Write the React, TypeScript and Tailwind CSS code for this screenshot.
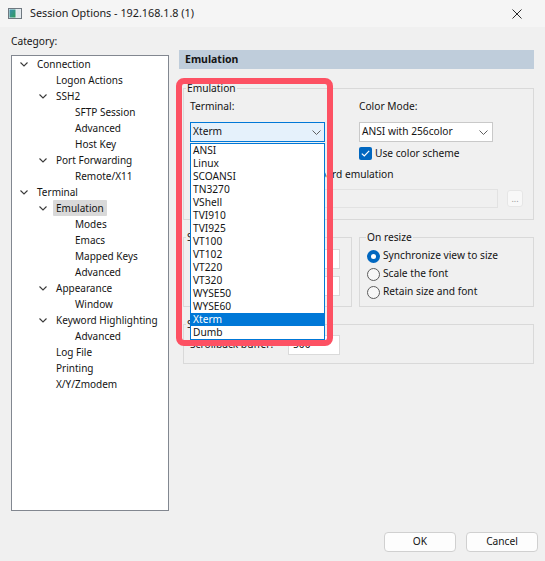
import React from "react";

type Node = { l: number; t: string; c?: boolean; sel?: boolean };

const tree: Node[] = [
  { l: 0, t: "Connection", c: true },
  { l: 1, t: "Logon Actions" },
  { l: 1, t: "SSH2", c: true },
  { l: 2, t: "SFTP Session" },
  { l: 2, t: "Advanced" },
  { l: 2, t: "Host Key" },
  { l: 1, t: "Port Forwarding", c: true },
  { l: 2, t: "Remote/X11" },
  { l: 0, t: "Terminal", c: true },
  { l: 1, t: "Emulation", c: true, sel: true },
  { l: 2, t: "Modes" },
  { l: 2, t: "Emacs" },
  { l: 2, t: "Mapped Keys" },
  { l: 2, t: "Advanced" },
  { l: 1, t: "Appearance", c: true },
  { l: 2, t: "Window" },
  { l: 1, t: "Keyword Highlighting", c: true },
  { l: 2, t: "Advanced" },
  { l: 1, t: "Log File" },
  { l: 1, t: "Printing" },
  { l: 1, t: "X/Y/Zmodem" },
];

const pads = ["pl-[8px]", "pl-[27px]", "pl-[46px]"];

const terms = [
  "ANSI",
  "Linux",
  "SCOANSI",
  "TN3270",
  "VShell",
  "TVI910",
  "TVI925",
  "VT100",
  "VT102",
  "VT220",
  "VT320",
  "WYSE50",
  "WYSE60",
  "Xterm",
  "Dumb",
];

function Chevron({ className = "" }: { className?: string }) {
  return (
    <svg width="8" height="5" viewBox="0 0 8 5" className={className}>
      <path d="M0.5 0.5 L4 4 L7.5 0.5" fill="none" stroke="#3a3a3a" strokeWidth="1.1" />
    </svg>
  );
}

function SelChevron() {
  return (
    <svg width="9" height="5" viewBox="0 0 9 5">
      <path d="M0.5 0.5 L4.5 4.5 L8.5 0.5" fill="none" stroke="#606060" strokeWidth="1" />
    </svg>
  );
}

function Radio({ on }: { on?: boolean }) {
  if (on)
    return (
      <span className="w-[13px] h-[13px] rounded-full bg-[#0067c0] flex items-center justify-center shrink-0">
        <span className="w-[5px] h-[5px] rounded-full bg-white" />
      </span>
    );
  return <span className="w-[13px] h-[13px] rounded-full border border-[#5c5c5c] bg-[#f7f7f7] shrink-0" />;
}

export default function App() {
  return (
    <div className="w-[545px] h-[561px] bg-[#f0f0f0] flex flex-col relative overflow-hidden text-[#141414] text-[10.2px] font-['Noto_Sans',sans-serif] select-none">
      {/* title bar */}
      <div className="h-[27px] bg-[#f5f5f5] flex items-center pl-[8px] pr-[23px] shrink-0">
        <svg width="14" height="11" viewBox="0 0 14 11" className="shrink-0">
          <defs>
            <linearGradient id="g1" x1="0" y1="0" x2="1" y2="1">
              <stop offset="0" stopColor="#3a8fb0" />
              <stop offset="1" stopColor="#2f9a5a" />
            </linearGradient>
          </defs>
          <rect x="0.5" y="0.5" width="13" height="10" fill="#e8eef2" stroke="#6f7880" />
          <rect x="1.5" y="1.5" width="6" height="8" fill="url(#g1)" />
          <rect x="8.5" y="1.5" width="4" height="8" fill="#dfe6ea" />
        </svg>
        <span className="ml-[8px] text-[10.8px] text-[#1a1a1a]">Session Options - 192.168.1.8 (1)</span>
        <span className="flex-1" />
        <svg width="10" height="10" viewBox="0 0 10 10">
          <path d="M0.5 0.5 L9.5 9.5 M9.5 0.5 L0.5 9.5" stroke="#2a2a2a" strokeWidth="1" />
        </svg>
      </div>

      {/* body */}
      <div className="flex-1 flex pl-[11px] gap-[10px]">
        {/* left */}
        <div className="w-[158px] flex flex-col pt-[7px]">
          <div className="h-[14px] leading-[14px]">Category:</div>
          <div className="mt-[7px] h-[456px] bg-white border border-[#828790] flex flex-col text-[10px]">
            {tree.map((n, i) => (
              <div key={i} className={`h-[16px] flex items-center ${pads[n.l]}`}>
                <span className="w-[17px] flex items-center shrink-0">{n.c && <Chevron />}</span>
                <span
                  className={`leading-[16px] whitespace-nowrap ${n.sel ? "bg-[#d9d9d9] px-[3px] -ml-[3px] rounded-[1px]" : ""}`}
                >
                  {n.t}
                </span>
              </div>
            ))}
          </div>
        </div>

        {/* right */}
        <div className="w-[355px] flex flex-col pt-[23px]">
          <div className="h-[19px] bg-[#bfcddb] pl-[6px] font-bold leading-[19px] text-[10.5px]">Emulation</div>

          <fieldset className="mt-[12px] ml-[4px] border border-[#d9d9d9] px-[6px] pb-[11px]">
            <legend className="-ml-[4px] px-[1px] leading-[14px]">Emulation</legend>
            <div className="mt-[4px] flex h-[14px] leading-[14px]">
              <span className="w-[135px]">Terminal:</span>
              <span className="ml-[34px]">Color Mode:</span>
            </div>
            <div className="mt-[9px] flex">
              <div className="w-[135px] h-[20px] bg-[#e5f1fb] border border-[#0078d7] flex items-center pl-[2px] pr-[3px]">
                <span className="flex-1">Xterm</span>
                <SelChevron />
              </div>
              <div className="ml-[34px] w-[134px] h-[20px] bg-white border border-[#c9c9c9] flex items-center pl-[2px] pr-[4px]">
                <span className="flex-1">ANSI with 256color</span>
                <SelChevron />
              </div>
            </div>
            <div className="mt-[5px] ml-[169px] h-[13px] flex items-center gap-[3px]">
              <span className="w-[13px] h-[13px] rounded-[2px] bg-[#0067c0] flex items-center justify-center">
                <svg width="9" height="7" viewBox="0 0 9 7">
                  <path d="M0.8 3.6 L3.3 6 L8.2 0.9" fill="none" stroke="#fff" strokeWidth="1.2" />
                </svg>
              </span>
              <span className="leading-[13px]">Use color scheme</span>
            </div>
            <div className="mt-[7px] h-[14px] flex items-center gap-[3px]">
              <span className="w-[13px] h-[13px] rounded-[2px] border border-[#5c5c5c] bg-white" />
              <span className="leading-[14px] whitespace-nowrap">Select an alternate keyboard emulation</span>
            </div>
            <div className="mt-[8px] flex items-center">
              <div className="w-[308px] h-[19px] bg-[#f0f0f0] border border-[#e2e2e2]" />
              <div className="ml-[9px] w-[16px] h-[17px] rounded-[3px] bg-[#f8f8f8] border border-[#e6e6e6] flex items-end justify-center pb-[3px] text-[#9a9a9a] leading-none text-[9px]">
                ...
              </div>
            </div>
          </fieldset>

          <div className="mt-[10px] ml-[4px] flex gap-[7px]">
            <fieldset className="w-[169px] border border-[#d9d9d9] pl-[6px] pr-[11px] pb-[10px]">
              <legend className="-ml-[4px] px-[1px] leading-[14px]">Size</legend>
              <div className="mt-[5px] flex items-center justify-between">
                <span>Logical rows:</span>
                <div className="w-[52px] h-[20px] bg-white border border-[#dadada] flex items-center pl-[4px]">24</div>
              </div>
              <div className="mt-[7px] flex items-center justify-between">
                <span>Logical columns:</span>
                <div className="w-[52px] h-[20px] bg-white border border-[#dadada] flex items-center pl-[4px]">80</div>
              </div>
            </fieldset>
            <fieldset className="w-[175px] border border-[#d9d9d9] pl-[7px] pb-[5px]">
              <legend className="-ml-[1px] px-[1px] leading-[14px]">On resize</legend>
              <div className="mt-[3px] h-[18px] flex items-center gap-[3px]">
                <Radio on />
                <span>Synchronize view to size</span>
              </div>
              <div className="h-[18px] flex items-center gap-[3px]">
                <Radio />
                <span>Scale the font</span>
              </div>
              <div className="h-[18px] flex items-center gap-[3px]">
                <Radio />
                <span>Retain size and font</span>
              </div>
            </fieldset>
          </div>

          <fieldset className="mt-[10px] ml-[4px] border border-[#d9d9d9] pl-[6px] pb-[8px]">
            <legend className="-ml-[4px] px-[1px] leading-[14px]">Scrollback</legend>
            <div className="mt-[4px] flex items-center">
              <span className="w-[98px]">Scrollback buffer:</span>
              <div className="w-[52px] h-[20px] bg-white border border-[#dadada] flex items-center pl-[4px]">500</div>
            </div>
          </fieldset>
        </div>
      </div>

      {/* footer */}
      <div className="h-[50px] shrink-0 flex justify-end gap-[10px] pr-[7px] pt-[21px]">
        <div className="w-[72px] h-[20px] rounded-[4px] bg-[#fdfdfd] border border-[#d0d0d0] flex items-center justify-center">OK</div>
        <div className="w-[72px] h-[20px] rounded-[4px] bg-[#fdfdfd] border border-[#d0d0d0] flex items-center justify-center">Cancel</div>
      </div>

      {/* open dropdown list overlay */}
      <div className="absolute left-[190px] top-[143px] w-[135px] h-[197px] bg-white border border-[#0078d7] flex flex-col">
        {terms.map((t) => (
          <div
            key={t}
            className={`h-[13px] leading-[13px] pl-[2px] ${t === "Xterm" ? "bg-[#0078d7] text-white" : ""}`}
          >
            {t}
          </div>
        ))}
      </div>

      {/* red highlight annotation */}
      <div className="absolute left-[176px] top-[78px] w-[157px] h-[268px] border-[6px] border-[#fd5163] rounded-[8px]" />
    </div>
  );
}
